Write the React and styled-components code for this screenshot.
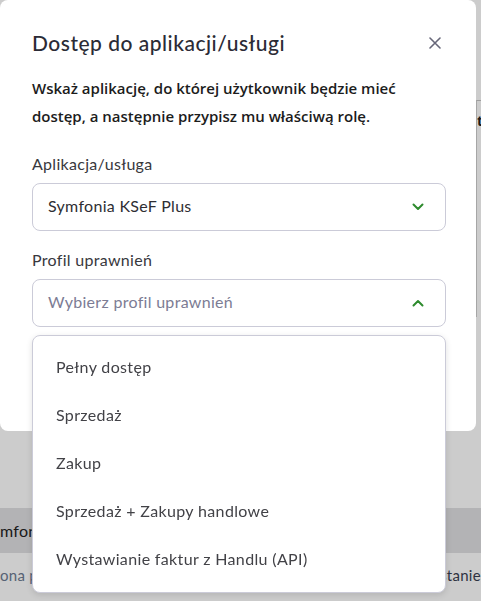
import React from "react"
import styled, { createGlobalStyle } from "styled-components"

const Global = createGlobalStyle`
  html, body {
    margin: 0;
    padding: 0;
    background: #fff;
    overflow: hidden;
  }
  body {
    font-family: "Lato", "Noto Sans", sans-serif;
  }
`

const Page = styled.div`
  width: 481px;
  height: 601px;
  display: flex;
  flex-direction: column;
  background: #fff;
`

const PageTop = styled.div`
  flex: 0 0 508px;
  display: flex;
  justify-content: flex-end;
  padding-top: 100px;
  box-sizing: border-box;
`

const SideTable = styled.div`
  width: 5px;
  height: 217px;
  border-top: 1px solid #c6c6c6;
  border-left: 1px solid #d0d0d0;
  font-family: "Open Sans", sans-serif;
  font-weight: 700;
  font-size: 14px;
  color: #222;
  overflow: hidden;
  padding-top: 10px;
  box-sizing: border-box;
`

const Band = styled.div`
  flex: 0 0 45px;
  background: #e0e0e3;
  display: flex;
  align-items: center;
  font-size: 16px;
  letter-spacing: 0.3px;
  color: #222;
  white-space: nowrap;
  overflow: hidden;
`

const FootRow = styled.div`
  flex: 1;
  display: flex;
  justify-content: space-between;
  align-items: center;
  font-size: 15px;
  letter-spacing: 0.3px;
  white-space: nowrap;
  overflow: hidden;
  padding-bottom: 4px;
`

const FootText = styled.span`
  color: ${p => p.$tone};
`

const Overlay = styled.div`
  position: fixed;
  inset: 0;
  background: rgba(0, 0, 0, 0.2);
`

const Modal = styled.div`
  position: fixed;
  top: 0;
  left: 0;
  width: 476px;
  height: 431px;
  box-sizing: border-box;
  background: #fff;
  border-radius: 8px;
  padding: 31px 35px 0 32px;
  display: flex;
  flex-direction: column;
`

const Header = styled.div`
  display: flex;
  align-items: center;
  justify-content: space-between;
  height: 24px;
`

const Title = styled.h2`
  margin: 0;
  font-family: "Lato", sans-serif;
  font-weight: 500;
  font-size: 21px;
  line-height: 24px;
  letter-spacing: 0.5px;
  color: #2b2b36;
`

const CloseButton = styled.button`
  border: 0;
  background: none;
  padding: 0;
  width: 12px;
  height: 12px;
  display: flex;
  cursor: pointer;
`

const Lead = styled.p`
  margin: 19px 0 0;
  font-family: "Open Sans", sans-serif;
  font-weight: 600;
  font-size: 15px;
  line-height: 28px;
  color: #1c1c1c;
  max-width: 380px;
`

const Label = styled.div`
  margin-top: ${p => p.$top}px;
  margin-bottom: 7px;
  font-size: 16px;
  line-height: 24px;
  letter-spacing: 0.3px;
  color: #38383d;
`

const Field = styled.div`
  position: relative;
  width: 414px;
`

const Select = styled.div`
  height: 48px;
  box-sizing: border-box;
  border: 1px solid #cbcbd8;
  border-radius: 8px;
  display: flex;
  align-items: center;
  justify-content: space-between;
  padding: 0 21px 3px 15px;
  font-size: 16px;
  letter-spacing: 0.3px;
  color: ${p => (p.$placeholder ? "#7c7c94" : "#2e2e33")};

  svg {
    margin-top: 3px;
  }
`

const Menu = styled.ul`
  position: absolute;
  top: 56px;
  left: 0;
  right: 0;
  margin: 0;
  padding: 6px 0 10px;
  list-style: none;
  background: #fff;
  border: 1px solid #cbcbd8;
  border-radius: 8px;
  box-shadow: 0 2px 6px rgba(0, 0, 0, 0.12);
  z-index: 2;
`

const MenuItem = styled.li`
  height: 48px;
  display: flex;
  align-items: center;
  padding-left: 23px;
  font-size: 16px;
  letter-spacing: 0.35px;
  color: #424247;
`

const Chevron = ({ up }) => (
  <svg width="12" height="8" viewBox="0 0 12 8" fill="none">
    <polyline
      points={up ? "1.5,6.5 6,2 10.5,6.5" : "1.5,1.5 6,6 10.5,1.5"}
      stroke="#2e8b2e"
      strokeWidth="2"
      strokeLinecap="round"
      strokeLinejoin="round"
    />
  </svg>
)

const CloseIcon = () => (
  <svg width="12" height="12" viewBox="0 0 12 12">
    <path d="M1 1 L11 11 M11 1 L1 11" stroke="#676779" strokeWidth="1.6" strokeLinecap="round" />
  </svg>
)

const profiles = [
  "Pełny dostęp",
  "Sprzedaż",
  "Zakup",
  "Sprzedaż + Zakupy handlowe",
  "Wystawianie faktur z Handlu (API)",
]

export default function App() {
  return (
    <>
      <Global />
      <Page>
        <PageTop>
          <SideTable>t</SideTable>
        </PageTop>
        <Band>mfonia KSeF Plus</Band>
        <FootRow>
          <FootText $tone="#6d7a92">ona p</FootText>
          <FootText $tone="#3a3f52">rzystanie</FootText>
        </FootRow>
      </Page>
      <Overlay />
      <Modal>
        <Header>
          <Title>Dostęp do aplikacji/usługi</Title>
          <CloseButton aria-label="Zamknij">
            <CloseIcon />
          </CloseButton>
        </Header>
        <Lead>
          Wskaż aplikację, do której użytkownik będzie mieć dostęp, a następnie przypisz mu właściwą rolę.
        </Lead>
        <Label $top={22}>Aplikacja/usługa</Label>
        <Field>
          <Select>
            Symfonia KSeF Plus
            <Chevron />
          </Select>
        </Field>
        <Label $top={17}>Profil uprawnień</Label>
        <Field>
          <Select $placeholder>
            Wybierz profil uprawnień
            <Chevron up />
          </Select>
          <Menu>
            {profiles.map(p => (
              <MenuItem key={p}>{p}</MenuItem>
            ))}
          </Menu>
        </Field>
      </Modal>
    </>
  )
}
